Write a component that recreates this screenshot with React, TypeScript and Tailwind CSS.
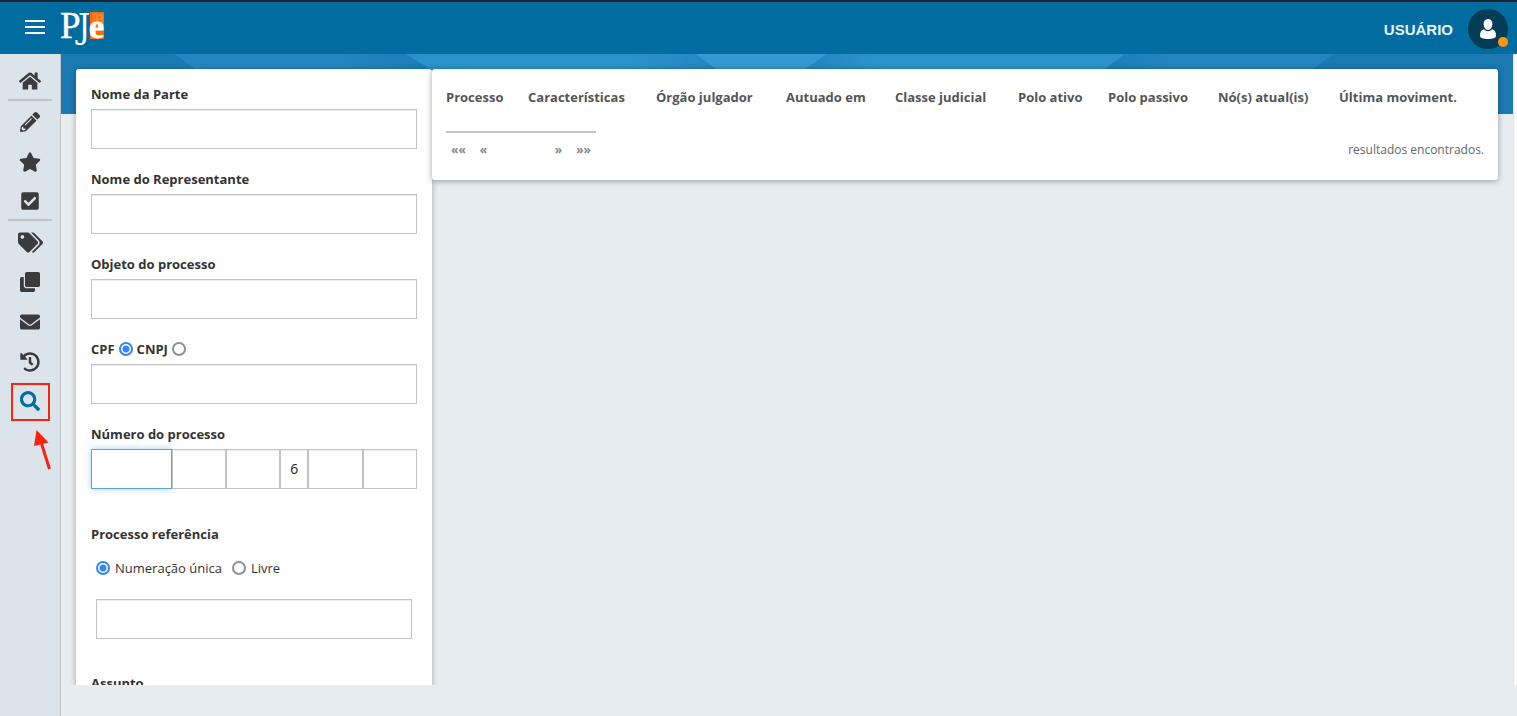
import React from "react";
import {
  FaCheckSquare,
  FaClone,
  FaEnvelope,
  FaHistory,
  FaHome,
  FaPencilAlt,
  FaSearch,
  FaStar,
  FaTags,
} from "react-icons/fa";

const inputClass =
  "block h-10 w-full border border-[#c3c3c3] bg-white px-3 text-sm text-[#222] shadow-[inset_0_1px_1px_rgba(0,0,0,0.075)] outline-none";

const radioClass =
  "size-[14px] shrink-0 appearance-none rounded-full border-2 border-[#8f8f9d] bg-white checked:border-[#3584f4] checked:bg-[radial-gradient(circle,#3584f4_3px,white_4px)]";

const menu = [
  { label: "Painel", icon: FaHome, size: "size-[22px]", divider: true },
  { label: "Minutas", icon: FaPencilAlt, size: "size-5", divider: false },
  { label: "Favoritos", icon: FaStar, size: "size-[22px]", divider: false },
  { label: "Tarefas", icon: FaCheckSquare, size: "size-5", divider: true },
  { label: "Etiquetas", icon: FaTags, size: "size-[25px]", divider: false },
  { label: "Lotes", icon: FaClone, size: "size-5", divider: false },
  { label: "Mensagens", icon: FaEnvelope, size: "size-5", divider: false },
  { label: "Recentes", icon: FaHistory, size: "size-5", divider: false },
];

const columns = [
  { title: "Processo", width: "w-[82px]" },
  { title: "Características", width: "w-[128px]" },
  { title: "Órgão julgador", width: "w-[130px]" },
  { title: "Autuado em", width: "w-[109px]" },
  { title: "Classe judicial", width: "w-[123px]" },
  { title: "Polo ativo", width: "w-[90px]" },
  { title: "Polo passivo", width: "w-[110px]" },
  { title: "Nó(s) atual(is)", width: "w-[121px]" },
  { title: "Última moviment.", width: "w-auto" },
];

const numberParts = [
  { label: "Sequencial", width: "grow-[3]", value: "" },
  { label: "Dígito", width: "grow-[2]", value: "" },
  { label: "Ano", width: "grow-[2]", value: "" },
  { label: "Ramo", width: "grow", value: "6" },
  { label: "Tribunal", width: "grow-[2]", value: "" },
  { label: "Origem", width: "grow-[2]", value: "" },
];

function Logo() {
  return (
    <a href="#" aria-label="PJe" className="block">
      <svg viewBox="0 0 48 52" className="h-[52px] w-12">
        <rect x="30" y="10" width="14" height="27" fill="#ff6a00" />
        <path
          d="M32 12h5v5h5v-4h-4M34 12v8M37 17v5h-5M42 11v9M38 20h5"
          fill="none"
          stroke="#ff9448"
          strokeWidth="1"
        />
        <text x="0" y="36" fontSize="37" fill="white" stroke="white" strokeWidth="0.4" fontFamily="Liberation Serif, serif">
          P
        </text>
        <text x="18" y="36" fontSize="34" fill="white" fontFamily="DejaVu Serif Condensed, DejaVu Serif, serif">
          J
        </text>
        <text
          x="29"
          y="36"
          fontSize="34"
          fontWeight="700"
          fill="white"
          stroke="white"
          strokeWidth="0.8"
          fontFamily="Liberation Serif, serif"
        >
          e
        </text>
      </svg>
    </a>
  );
}

function Header() {
  return (
    <header className="flex h-[54px] shrink-0 items-center border-t-2 border-[#1c2530] bg-[#006ca0] pr-[9px] pl-[25px]">
      <button type="button" aria-label="Menu" className="mr-[15px] mb-[2px] flex w-5 flex-col gap-1">
        <span className="h-[2px] bg-white" />
        <span className="h-[2px] bg-white" />
        <span className="h-[2px] bg-white" />
      </button>
      <Logo />
      <button type="button" className="ml-auto flex items-center gap-[15px] pt-[2px]">
        <span className="pt-[2px] font-['Liberation_Sans',sans-serif] text-[15px] font-bold text-[#e8f1f6]">USUÁRIO</span>
        <span className="relative flex size-10 items-center justify-center rounded-full bg-[#053d57]">
          <svg viewBox="0 0 16 20" className="h-5 w-4 fill-white">
            <path d="M8 0c3 0 4.400 2.200 4.400 5S10.500 11 8 11 3.600 7.800 3.600 5 5 0 8 0z" />
            <path d="M4 10.300c1 1.300 2.300 2 4 2s3-.7 4-2c2.800.7 4 2.700 4 6.700 0 2-3.500 3-8 3s-8-1-8-3c0-4 1.200-6 4-6.700z" />
          </svg>
          <span className="absolute right-0 bottom-[2px] size-[10px] rounded-full bg-[#ff9800]" />
        </span>
      </button>
    </header>
  );
}

function Sidebar() {
  return (
    <nav className="w-[61px] shrink-0 border-r border-[#c0c2c5] bg-[#dbe3eb] px-2 pt-[7px]">
      <ul>
        {menu.map(({ label, icon: Icon, size, divider }) => (
          <li
            key={label}
            className={
              divider
                ? "flex h-10 items-center justify-center border-b-2 border-[#c3c3c3] pt-[2px]"
                : "flex h-10 items-center justify-center pt-[2px]"
            }
          >
            <a href="#" aria-label={label} className="text-[#3b3b3b]">
              <Icon className={size} />
            </a>
          </li>
        ))}
        <li className="flex h-10 items-center justify-center pt-[2px]">
          <a
            href="#"
            aria-label="Consulta"
            className="flex h-[38px] w-[39px] items-center justify-center border-2 border-[#fb230b] pb-[2px] text-[#006ca0]"
          >
            <FaSearch className="size-5" />
          </a>
        </li>
      </ul>
      <svg viewBox="0 0 20 42" className="mt-[9px] ml-[25px] h-[42px] w-5">
        <path d="M8 12L16.500 39" stroke="#fb230b" strokeWidth="3" />
        <path d="M3.500 0L15.500 12.500L1 16z" fill="#fb230b" />
      </svg>
    </nav>
  );
}

function Banner() {
  return (
    <svg
      viewBox="0 0 1452 60"
      preserveAspectRatio="none"
      aria-hidden="true"
      className="absolute inset-x-0 top-0 h-[60px] w-full"
    >
      <defs>
        <linearGradient id="fadeA" x1="0" x2="1">
          <stop offset="0" stopColor="#2b93cc" />
          <stop offset="0.6" stopColor="#2b93cc" />
          <stop offset="0.85" stopColor="#2384bc" />
        </linearGradient>
        <linearGradient id="fadeB" x1="0" x2="1">
          <stop offset="0.12" stopColor="#2182ba" />
          <stop offset="0.35" stopColor="#2b93cc" />
          <stop offset="1" stopColor="#2b93cc" />
        </linearGradient>
        <linearGradient id="fadeC" x1="0" x2="1">
          <stop offset="0.15" stopColor="#1c7ab3" />
          <stop offset="0.45" stopColor="#2386c0" />
          <stop offset="1" stopColor="#2386c0" />
        </linearGradient>
        <linearGradient id="fadeD" x1="0" x2="1">
          <stop offset="0" stopColor="#2386c0" />
          <stop offset="0.5" stopColor="#2386c0" />
          <stop offset="0.8" stopColor="#1c7cb5" />
        </linearGradient>
      </defs>
      <rect width="1452" height="60" fill="#1b7ab2" />
      <path d="M114 0H345L441 60H194z" fill="url(#fadeD)" />
      <path d="M345 0H634L718 60H441z" fill="url(#fadeA)" />
      <path d="M634 0H766L700 47z" fill="#3399d2" />
      <path d="M766 0H1064L984 60H682z" fill="url(#fadeB)" />
      <path d="M1064 0H1272L1192 60H984z" fill="url(#fadeC)" />
    </svg>
  );
}

function TextField({ id, label }: { id: string; label: string }) {
  return (
    <div>
      <label htmlFor={id} className="mb-[5px] block font-bold">
        {label}
      </label>
      <input id={id} type="text" className={inputClass} />
    </div>
  );
}

function SearchForm() {
  return (
    <form className="w-[356px] shrink-0 self-start rounded-t-[3px] bg-white px-[15px] pt-[15px] pb-10 text-[13px] leading-5 text-[#333] shadow-[0_1px_6px_rgba(0,0,0,0.3)]">
      <div className="flex flex-col gap-5">
        <TextField id="parte" label="Nome da Parte" />
        <TextField id="representante" label="Nome do Representante" />
        <TextField id="objeto" label="Objeto do processo" />
        <div>
          <div className="mb-[5px] flex items-center gap-1 font-bold">
            <label htmlFor="cpf">CPF</label>
            <input id="cpf" type="radio" name="documento" defaultChecked className={radioClass} />
            <label htmlFor="cnpj">CNPJ</label>
            <input id="cnpj" type="radio" name="documento" className={radioClass} />
          </div>
          <input type="text" aria-label="CPF ou CNPJ" className={inputClass} />
        </div>
        <fieldset>
          <legend className="mb-[5px] block font-bold">Número do processo</legend>
          <div className="flex">
            {numberParts.map(({ label, width, value }, index) => (
              <input
                key={label}
                type="text"
                aria-label={label}
                defaultValue={value}
                className={`${width} h-10 w-0 min-w-0 border bg-white pb-[2px] text-center text-sm text-[#222] outline-none ${
                  index === 0
                    ? "border-[#5ba4e0] shadow-[0_0_6px_rgba(102,175,233,0.6)]"
                    : "border-[#c3c3c3] shadow-[inset_0_1px_1px_rgba(0,0,0,0.075)]"
                }`}
              />
            ))}
          </div>
        </fieldset>
      </div>
      <fieldset className="mt-[35px]">
        <legend className="font-bold">Processo referência</legend>
        <div className="mt-[14px] flex items-center px-[5px]">
          <input id="unica" type="radio" name="numeracao" defaultChecked className={radioClass} />
          <label htmlFor="unica" className="mr-[10px] ml-[5px]">
            Numeração única
          </label>
          <input id="livre" type="radio" name="numeracao" className={radioClass} />
          <label htmlFor="livre" className="ml-[5px]">
            Livre
          </label>
        </div>
        <div className="mt-[21px] px-[5px]">
          <input type="text" aria-label="Processo referência" className={inputClass} />
        </div>
      </fieldset>
      <div className="mt-[34px]">
        <TextField id="assunto" label="Assunto" />
      </div>
    </form>
  );
}

function Results() {
  return (
    <section className="min-w-0 flex-1 self-start rounded-[3px] bg-white px-[14px] text-[13px] leading-5 text-[#555] shadow-[0_1px_6px_rgba(0,0,0,0.35)]">
      <table className="mt-[18px] w-full table-fixed text-left">
        <thead>
          <tr>
            {columns.map(({ title, width }) => (
              <th key={title} className={`${width} p-0 font-bold whitespace-nowrap`}>
                {title}
              </th>
            ))}
          </tr>
        </thead>
      </table>
      <div className="mt-6 flex justify-between pb-5">
        <div className="flex w-[150px] border-t-2 border-[#c3c3c3] px-[5px] pt-[7px] text-[12px] font-bold text-[#888]">
          <button type="button" aria-label="Primeira página" className="mr-[14px]">««</button>
          <button type="button" aria-label="Página anterior">«</button>
          <button type="button" aria-label="Próxima página" className="mr-[14px] ml-auto">»</button>
          <button type="button" aria-label="Última página">»»</button>
        </div>
        <p className="mt-[9px] text-[12px] text-[#666]">resultados encontrados.</p>
      </div>
    </section>
  );
}

export default function App() {
  return (
    <div className="flex h-screen flex-col overflow-hidden bg-[#e8edf1] font-['Open_Sans',sans-serif]">
      <Header />
      <div className="flex min-h-0 flex-1">
        <Sidebar />
        <main className="flex min-w-0 flex-1 flex-col pb-[31px]">
          <div className="flex min-h-0 flex-1">
            <div className="relative flex min-w-0 flex-1 overflow-hidden">
              <Banner />
              <div className="relative flex flex-1 pt-[15px] pr-[15px] pl-[15px]">
                <SearchForm />
                <Results />
              </div>
            </div>
            <div className="w-1 shrink-0 border-l border-[#e4e4e4] bg-[#fafafa]" />
          </div>
        </main>
      </div>
    </div>
  );
}
